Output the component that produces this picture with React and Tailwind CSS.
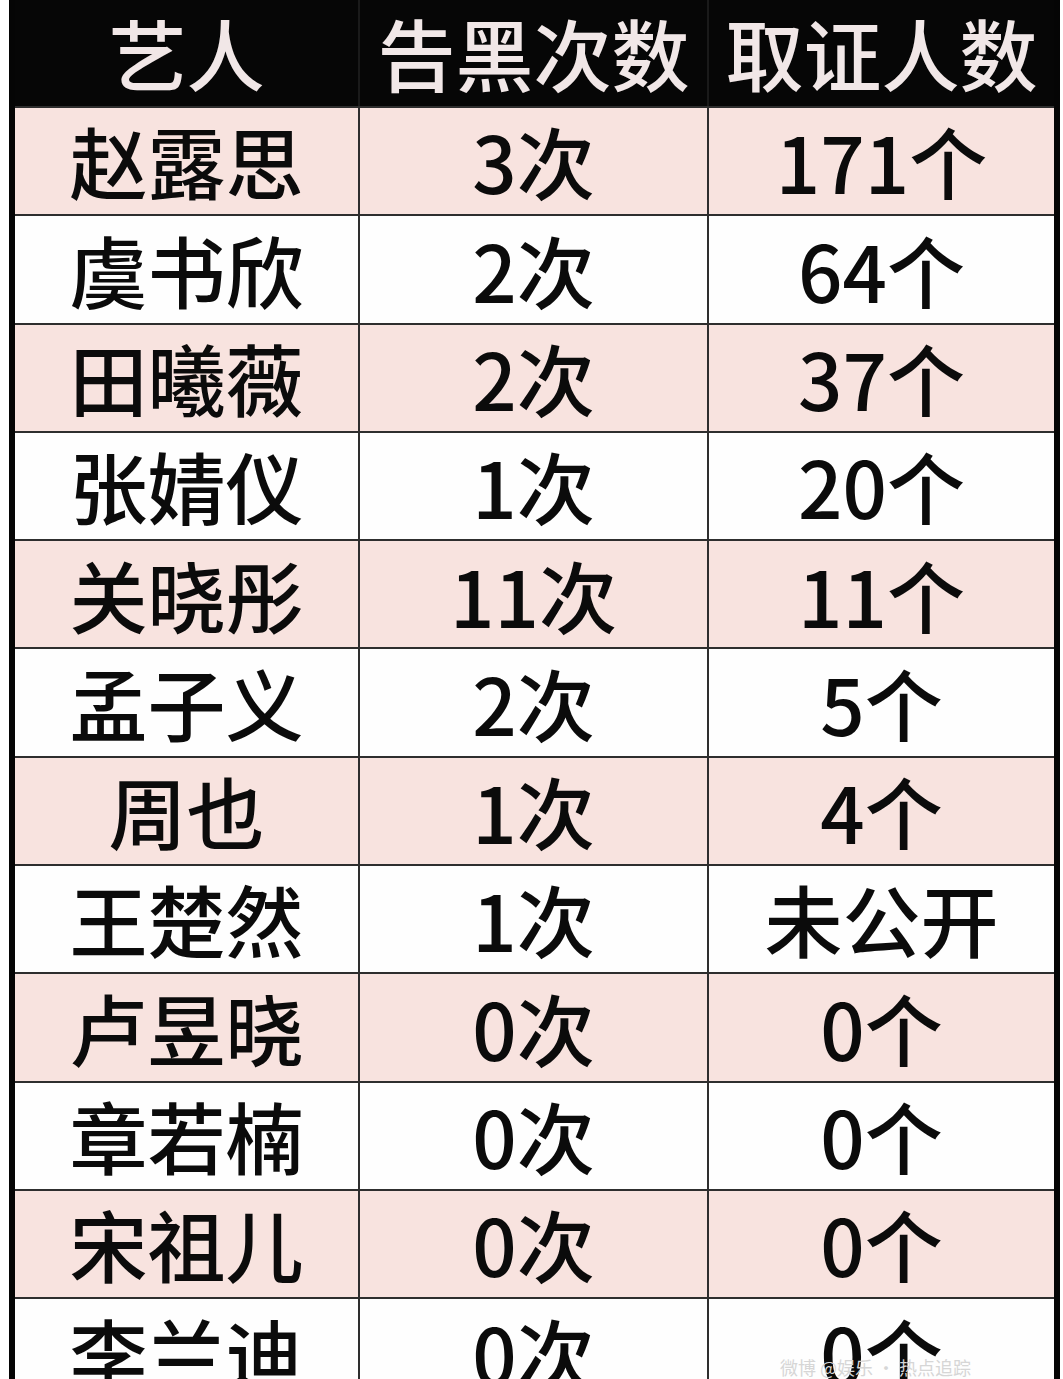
const ROWS = [
  ['赵露思', '3次', '171个'],
  ['虞书欣', '2次', '64个'],
  ['田曦薇', '2次', '37个'],
  ['张婧仪', '1次', '20个'],
  ['关晓彤', '11次', '11个'],
  ['孟子义', '2次', '5个'],
  ['周也', '1次', '4个'],
  ['王楚然', '1次', '未公开'],
  ['卢昱晓', '0次', '0个'],
  ['章若楠', '0次', '0个'],
  ['宋祖儿', '0次', '0个'],
  ['李兰迪', '0次', '0个'],
]

const FONT = { fontFamily: '"Noto Sans CJK SC", "Noto Sans", sans-serif' }

function Row({ cells, pink }) {
  const bg = pink ? 'bg-[#f8e3df]' : 'bg-[#fefefe]'
  return (
    <div className={`flex h-[108.3px] shrink-0 border-t-2 border-[#2e2e2e] ${bg}`}>
      <div className="flex w-[345px] items-center justify-center border-r-2 border-[#2e2e2e]">{cells[0]}</div>
      <div className="flex w-[349px] items-center justify-center border-r-2 border-[#2e2e2e]">{cells[1]}</div>
      <div className="flex flex-1 items-center justify-center">{cells[2]}</div>
    </div>
  )
}

export default function App() {
  return (
    <div className="relative h-[1379px] w-[1063px] overflow-hidden bg-white pl-[9px] pr-[3px]" style={FONT}>
      <div className="flex h-[1500px] flex-col border-x-[6px] border-[#050505] text-[78px] font-medium leading-[1.2] text-[#0b0b0b]">
        <div className="flex h-[106px] shrink-0 bg-[#060606] text-[#f1e7e7]">
          <div className="flex w-[345px] items-center justify-center border-r-2 border-[#1a1a1a]">艺人</div>
          <div className="flex w-[349px] items-center justify-center border-r-2 border-[#1a1a1a]">告黑次数</div>
          <div className="flex flex-1 items-center justify-center">取证人数</div>
        </div>
        {ROWS.map((r, i) => (
          <Row key={r[0]} cells={r} pink={i % 2 === 0} />
        ))}
      </div>
      <div className="absolute bottom-0 left-[780px] text-[18px] leading-[24px] text-[#d6d6d6]">微博 @娱乐 · 热点追踪</div>
    </div>
  )
}
